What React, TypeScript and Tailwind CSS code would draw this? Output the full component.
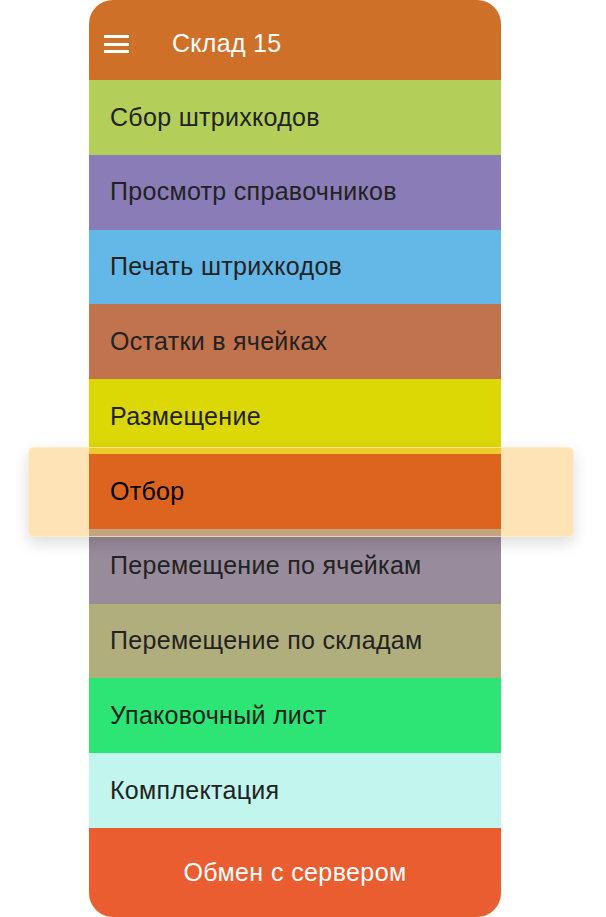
import React from "react";

type Item = { label: string; bg: string; selected?: boolean };

const items: Item[] = [
  { label: "Сбор штрихкодов", bg: "bg-[#b3cf5a]" },
  { label: "Просмотр справочников", bg: "bg-[#8a7cb6]" },
  { label: "Печать штрихкодов", bg: "bg-[#64b8e8]" },
  { label: "Остатки в ячейках", bg: "bg-[#c0734c]" },
  { label: "Размещение", bg: "bg-[#dcd806]" },
  { label: "Отбор", bg: "bg-[#dc641f]", selected: true },
  { label: "Перемещение по ячейкам", bg: "bg-[#988b9c]" },
  { label: "Перемещение по складам", bg: "bg-[#b1ae7d]" },
  { label: "Упаковочный лист", bg: "bg-[#2ce574]" },
  { label: "Комплектация", bg: "bg-[#c2f5ee]" },
];

function MenuIcon() {
  return (
    <div className="flex w-[25px] flex-col gap-[4.5px]">
      <span className="block h-[3px] w-full bg-white" />
      <span className="block h-[3px] w-full bg-white" />
      <span className="block h-[3px] w-full bg-white" />
    </div>
  );
}

export default function App() {
  return (
    <div className="min-h-[917px] w-full bg-white pl-[89px] font-['Liberation_Sans',Arial,sans-serif] tracking-[0.3px]">
      <div className="relative flex h-[917px] w-[412px] flex-col">
        <header className="flex h-[80px] shrink-0 items-center rounded-t-[24px] bg-[#cf7029] pl-[15px] pt-[8px]">
          <MenuIcon />
          <span className="ml-[43px] text-[25px] text-white">Склад 15</span>
        </header>
        {items.map((it) => (
          <div
            key={it.label}
            className={`flex h-[74.8px] shrink-0 items-center pl-[21px] text-[25px] ${it.bg} ${
              it.selected ? "relative z-20 text-black" : "text-[#222222]"
            }`}
          >
            {it.label}
          </div>
        ))}
        <button className="flex h-[89px] shrink-0 items-center justify-center rounded-b-[24px] bg-[#e95d30] text-[25px] tracking-[0.4px] text-white">
          Обмен с сервером
        </button>
        {/* highlight band behind the selected row */}
        <div className="pointer-events-none absolute -left-[61px] -right-[73px] top-[447px] z-10 h-[90px] rounded-[6px] border border-[#fff0d6]/60 bg-[#fbc15d]/45 shadow-[0_6px_16px_rgba(0,0,0,0.14)]" />
      </div>
    </div>
  );
}
